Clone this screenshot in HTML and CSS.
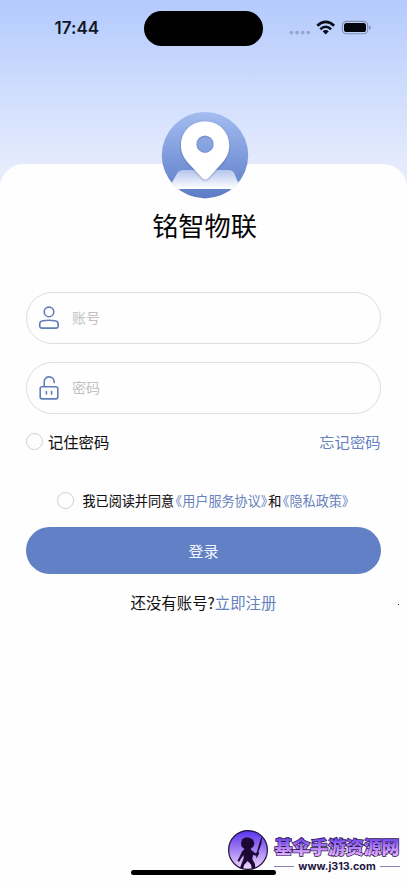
FILE: index.html
```
<!DOCTYPE html>
<html lang="zh-CN">
<head>
<meta charset="utf-8">
<meta name="viewport" content="width=device-width, initial-scale=1">
<title>铭智物联</title>
<link rel="stylesheet" href="styles.css">
</head>
<body>
<div class="screen">
  <header class="status">
    <span class="time">17:44</span>
    <span class="island"></span>
    <svg class="indicators" width="84" height="18" viewBox="0 0 84 18">
      <g fill="#96a4ca"><circle cx="2.3" cy="13.6" r="1.8"/><circle cx="8" cy="13.6" r="1.8"/><circle cx="13.7" cy="13.6" r="1.8"/><circle cx="19.3" cy="13.6" r="1.8"/></g>
      <g fill="none" stroke="#080b18" stroke-width="2.6"><path d="M28.3 6.7Q36.7-.9 45.1 6.7"/><path d="M31.3 10.2Q36.7 5.3 42.1 10.2"/></g>
      <path d="M33.6 12.2Q36.7 9.6 39.8 12.2L36.7 15.4Z" fill="#080b18"/>
      <rect x="53.3" y="2.4" width="25.4" height="12.4" rx="4" fill="none" stroke="#8390ad" stroke-width="1.1"/>
      <rect x="55" y="4.1" width="22" height="9" rx="2.6" fill="#04060e"/>
      <path d="M80.2 6.5Q83.2 8.6 80.2 10.7Z" fill="#6d7892"/>
    </svg>
  </header>
  <main class="sheet">
    <svg class="logo" width="88" height="88" viewBox="0 0 88 88">
      <defs>
        <linearGradient id="disc" x1="0" y1="0" x2="0" y2="1"><stop offset="0" stop-color="#a4bdf0"/><stop offset=".55" stop-color="#7b98da"/><stop offset="1" stop-color="#5c7cc4"/></linearGradient>
        <linearGradient id="base" x1="0" y1="0" x2="0" y2="1"><stop offset="0" stop-color="#b4c4ea"/><stop offset=".7" stop-color="#e9eefa"/><stop offset="1" stop-color="#fefefe"/></linearGradient>
        <filter id="shade" x="-20%" y="-20%" width="140%" height="140%"><feDropShadow dx="0" dy=".7" stdDeviation="1" flood-color="#3e5b9e" flood-opacity=".6"/></filter>
      </defs>
      <circle cx="44" cy="43.2" r="43.2" fill="url(#disc)"/>
      <path d="M0 71H88V77H0Z" fill="#fefefe"/>
      <path d="M10.5 71.5 16.5 60.8Q18.2 58 21.5 58H68.5Q71.5 58 73 60.8L77.5 71.5 73 77H15Z" fill="url(#base)"/>
      <path filter="url(#shade)" fill="#fff" fill-rule="evenodd" d="M44 9.6C30 9.6 20 20 20 33.5C20 40.5 23 46.3 28 51.8L41 65.8Q44.3 69.3 47.6 65.8L60.3 51.8C65.3 46.3 68.2 40.5 68.2 33.5C68.2 20 58 9.6 44 9.6ZM44 23.5A8.7 8.7 0 1 1 44 40.9A8.7 8.7 0 1 1 44 23.5Z"/>
    </svg>
    <h1>铭智物联</h1>
    <form class="form">
      <div class="field">
        <svg class="icon" width="22" height="26" viewBox="0 0 22 26" fill="none" stroke="#627eb9" stroke-width="1.6" stroke-linejoin="round"><circle cx="11" cy="6.9" r="4.8"/><path d="M1.7 20.8V19.1C1.7 16.7 3 16 5 15.7Q11 14.9 16.8 15.7C19 16 20.2 16.8 20.2 19.1V20.8Q20.2 23.1 18 23.1H4Q1.7 23.1 1.7 20.8Z"/></svg>
        <span>账号</span>
      </div>
      <div class="field">
        <svg class="icon" width="22" height="26" viewBox="0 0 22 26" fill="none" stroke="#627eb9" stroke-width="1.6" stroke-linecap="round"><rect x="2.2" y="11.7" width="17.6" height="12.2" rx="1.8"/><path d="M6.2 11.4V6.8C6.2 .1 16.2 .1 16.3 7.6M8.4 16.5V18.9M13.6 16.5V18.9"/></svg>
        <span>密码</span>
      </div>
      <div class="options"><span class="radio"></span><span class="remember">记住密码</span><a class="forgot">忘记密码</a></div>
      <div class="agreement"><span class="radio"></span><span class="terms">我已阅读并同意<a><i class="open">《</i>用户服务协议<i>》</i></a>和<a><i class="open">《</i>隐私政策<i>》</i></a></span></div>
      <div class="login">登录</div>
      <p class="register">还没有账号?<a>立即注册</a></p>
    </form>
  </main>
  <span class="speck"></span>
  <span class="home-bar"></span>
  <footer class="watermark">
    <svg width="42" height="42" viewBox="0 0 42 42">
      <defs><linearGradient id="violet" x1="0" y1="0" x2="0" y2="1"><stop stop-color="#5734ed"/><stop offset=".45" stop-color="#9b78f0"/><stop offset="1" stop-color="#f4dcff"/></linearGradient></defs>
      <circle cx="21" cy="21" r="19.4" fill="url(#violet)" stroke="#21123f" stroke-width="1.2"/>
      <path fill="#1d0835" d="M14 14 15 10.5 18 8.5 22 8.5 26 10.5 27.4 14 26.5 17.5 23.5 20 26 22.5 29 24.5 30 22.5 33 12 34.3 8.5 35 9 34.3 15 31.5 22.5 32 24.5 30 28.5 29 29 29.4 26.8 26 26 25.3 30 28 35 28.3 39 24.7 39.5 24 35.5 20.7 32 17 36 16.3 39.5 13 38.8 15 33.5 16.7 29.5 16.5 26 14 29.5 12 33 10.4 31.6 12 29 15 22.5 17.5 20 14.5 17.5Z"/>
    </svg>
    <div class="brand">
      <svg class="brand-name" width="130" height="23" viewBox="0 0 130 23">
        <defs><linearGradient id="name" x1="0" y1="0" x2="0" y2="1"><stop offset=".2" stop-color="#6d43eb"/><stop offset=".8" stop-color="#e0acff"/></linearGradient></defs>
        <text x="2.5" y="18" textLength="125" fill="url(#name)">基伞手游资源网</text>
      </svg>
      <div class="url">www.j313.com</div>
    </div>
  </footer>
</div>
</body>
</html>
```
FILE: styles.css
```
* { box-sizing: border-box; }
body { margin: 0; background: #fefefe; color: #111; font-family: "Noto Sans CJK SC", sans-serif; }
.screen { position: relative; height: 883px; overflow: hidden; background: linear-gradient(#b4cafd 0, #cddcfd 85px, #e5ebfd 165px, #e8effe 190px); }
.status { display: flex; align-items: center; height: 56px; padding-left: 54.5px; }
.time { width: 89.5px; font: 600 17px Inter, sans-serif; letter-spacing: .05px; color: #101727; }
.island { width: 119px; height: 35px; border-radius: 18px; background: #000; }
.indicators { margin-left: 25.5px; }
.sheet { display: flex; flex-direction: column; align-items: center; height: 775px; margin-top: 108px; border-radius: 24px 24px 0 0; background: #fefefe; padding-left: 1px; }
.logo { flex: none; margin-top: -52px; margin-left: 2px; }
h1 { margin: 6px 0 0 1px; font-size: 26.2px; font-weight: 400; line-height: 38px; color: #050505; }
.form { width: 100%; margin-top: 48px; padding: 0 26px 0 25px; }
.field { display: flex; align-items: center; height: 52px; margin-bottom: 17.5px; padding-left: 11px; border: 1px solid #dedee1; border-radius: 26px; font-size: 14px; color: #c2c2c4; }
.field span { margin-top: -2px; }
.icon { margin-right: 12px; }
.options { display: flex; align-items: center; height: 22px; margin-top: -1px; font-size: 15.3px; }
.options .remember, .options .forgot { position: relative; top: -.5px; }
.radio { flex: none; width: 17px; height: 17px; border: 1px solid #cfcfd2; border-radius: 50%; }
.remember { margin-left: 5px; -webkit-text-stroke: .1px #111; }
.forgot { margin-left: auto; margin-right: .5px; }
a { color: #6681bd; }
.agreement { display: flex; align-items: center; height: 20px; margin: 38.5px 0 0 30.5px; font-size: 13.1px; white-space: nowrap; }
.terms { margin-left: 9px; -webkit-text-stroke: .1px #111; }
.terms a { -webkit-text-stroke: 0; }
.terms i { font-style: normal; font-feature-settings: "halt"; padding-right: 1px; }
.terms .open { padding: 0 0 0 1.5px; }
.login { display: flex; align-items: center; justify-content: center; height: 47px; margin-top: 16.5px; border-radius: 24px; background: #6180c5; color: #f5f8ff; font-size: 15px; }
.register { margin: 16.5px 0 0; text-align: center; font-size: 15.4px; line-height: 22px; }
.speck { position: absolute; left: 398px; top: 604px; width: 1px; height: 1px; background: #331111; }
.home-bar { position: absolute; left: 131px; top: 870px; width: 145px; height: 5px; border-radius: 3px; background: #000; }
.watermark { position: absolute; left: 227px; top: 829px; display: flex; }
.brand { width: 130px; margin-left: 3px; padding-top: 7px; }
.brand-name { display: block; overflow: visible; font-family: "Noto Sans CJK SC", sans-serif; font-size: 18px; font-weight: 900; stroke: #291247; stroke-width: 1.4px; paint-order: stroke; }
.url { display: flex; align-items: center; justify-content: center; gap: 4px; margin-top: 1px; font: 700 10.7px/13px Inter, sans-serif; color: #241542; }
.url::before, .url::after { content: ""; width: 20px; height: 1px; background: #8d82b8; }
```
